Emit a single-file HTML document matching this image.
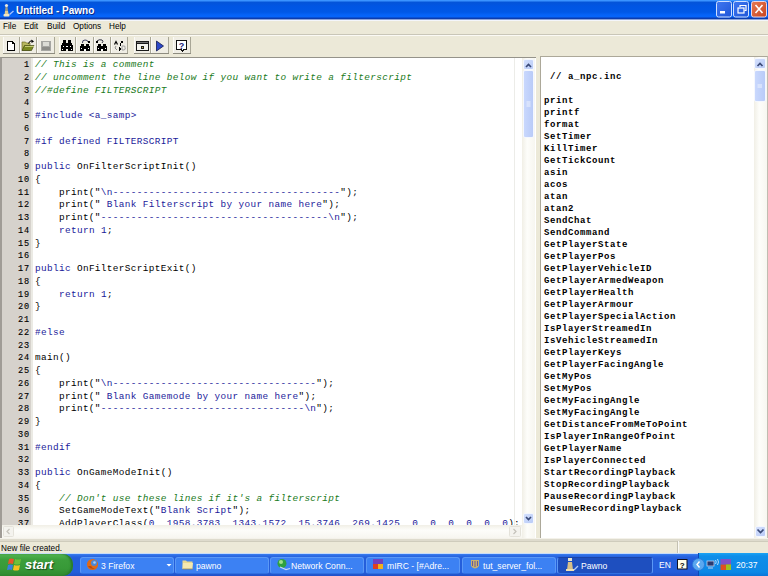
<!DOCTYPE html>
<html><head><meta charset="utf-8">
<style>
*{margin:0;padding:0;box-sizing:border-box}
html,body{width:768px;height:576px;overflow:hidden;background:#ece9d8;font-family:"Liberation Sans",sans-serif}
.a{position:absolute}
svg{position:absolute;overflow:visible}
/* title bar */
#title{left:0;top:0;width:768px;height:21px;background:linear-gradient(#3a93ff 0,#3a93ff 1px,#0454d8 2px,#0055e3 6px,#0058e6 12px,#0563f8 15px,#0665fa 17px,#0a3cb0 18px,#0a3cb0 19px,#8da4d8 19px,#8da4d8 20px,#f4f6fb 20px)}
#ttext{left:16px;top:5px;font-size:10px;font-weight:bold;color:#fff;letter-spacing:0px;text-shadow:1px 1px 0 #0a2a8a}
/* menu */
#menu{left:0;top:21px;width:768px;height:13px;background:#ece9d8}
.mi{top:22px;font-size:8.2px;color:#000}
#tbsep{left:0;top:34px;width:768px;height:2px;background:#c9c6b8;border-bottom:1px solid #fbfaf5}
/* editor */
#edframe{left:0px;top:57px;width:536px;height:481px;background:#fff;border-top:1px solid #95938a;border-left:2px solid #a09c96}
#gut{left:2px;top:58px;width:31px;height:467px;background:#d6d2cc;border-right:2px solid #ebeae4}
#gutnum{left:3px;top:59px;width:27px;text-align:right;font-family:"Liberation Mono",monospace;font-size:8.6px;letter-spacing:0.84px;font-weight:normal;-webkit-text-stroke:0.12px #000;line-height:12.75px;color:#000;white-space:pre}
#code{left:35px;top:59px;font-family:"Liberation Mono",monospace;font-size:9.4px;letter-spacing:0.36px;line-height:12.75px;white-space:pre;color:#000}
#code b{font-weight:normal}
#code .c{color:#1a7a22;font-style:italic}
#code .p{color:#1a1a9a}
#code .k{color:#1a1a9a}
#code .s{color:#1a1a9a}
#code .n{color:#000}
#edclip{left:0px;top:0px;width:520px;height:525px;overflow:hidden}
#gutnum,#code{top:59px}
#vline{left:514px;top:58px;width:1px;height:467px;background:#ecece8}
/* scrollbars */
.vtrack{background:linear-gradient(90deg,#f1efe6,#fdfdfa 40%,#f7f6f0)}
.sbtn{border-radius:2px;background:linear-gradient(135deg,#d4e0fd,#b9cbf7);border:1px solid #f4f7fe}
.thumb{border-radius:2px;background:linear-gradient(90deg,#c9d8fd,#b9cbf8);border:1px solid #f4f7fe}
#hsb{left:2px;top:525px;width:520px;height:13px;background:linear-gradient(#f1efe6,#fdfdfa 40%,#f7f6f0)}
/* right panel */
#rp{left:540px;top:56px;width:228px;height:483px;background:#fff;border-top:1px solid #aca899;border-left:1px solid #aca899;border-right:1px solid #c0bcb0}
#npc{left:544px;top:59px;font-family:"Liberation Mono",monospace;font-size:9px;letter-spacing:0.6px;font-weight:bold;line-height:12px;white-space:pre;color:#000}
/* status */
#status{left:0;top:538px;width:768px;height:15px;background:linear-gradient(#f4f2ea 0,#f4f2ea 1px,#dedbcd 1px,#dedbcd 3px,#cfccbc 3px,#cfccbc 4px,#ece9d8 4px)}
#stext{left:1px;top:544px;font-size:8.2px;color:#000}
/* taskbar */
#task{left:0;top:553px;width:768px;height:23px;background:linear-gradient(#c8dcf8 0,#c8dcf8 1px,#3a7ef0 1px,#2a68e2 3px,#245edb 5px,#245edb 19px,#2050c8 23px)}
#start{left:0;top:554px;width:73px;height:22px;border-radius:0 10px 10px 0;background:linear-gradient(#58b858 0,#4aae4a 2px,#3c9e3c 6px,#389a38 14px,#2f8a2f 22px);box-shadow:inset -2px 0 2px #2a7a2a}
#starttext{left:25px;top:557px;font-size:13px;font-weight:bold;font-style:italic;color:#fff;text-shadow:1px 1px 1px #1a4a1a}
.tk{top:557px;height:17px;width:94px;border-radius:3px;background:#3c81f3;border:1px solid #5a98f6;border-bottom-color:#3070e0}
.tkt{font-size:8.6px;color:#fff;top:3px;left:20px;white-space:nowrap}
#tray{left:698px;top:553px;width:70px;height:23px;background:linear-gradient(#1ba4f5 0,#0f8ee9 3px,#0c88e6 19px,#0a74d8 23px);border-left:1px solid #0a4ab8}
</style></head><body>
<div class="a" id="title"></div>
<div class="a" id="ttext">Untitled - Pawno</div>
<!-- title icon -->
<svg width="16" height="16" style="left:2px;top:2px" viewBox="0 0 16 16">
<circle cx="4.5" cy="3.5" r="1.6" fill="#e8e8e0"/>
<path d="M3.5 5 H5.5 L6 9 H3 Z" fill="#9a9a88"/>
<path d="M2.5 13 L3 9 H6 L6.8 13 Z" fill="#e0cc94"/>
<rect x="1.5" y="12" width="6" height="2.5" rx="1" fill="#f2e6c4"/>
<path d="M7.5 12.5 L11.5 9" stroke="#a8c4ff" stroke-width="1.3"/>
</svg>
<!-- window buttons -->
<svg width="52" height="17" style="left:716px;top:1px" viewBox="0 0 52 17">
<defs>
<linearGradient id="bl" x1="0" y1="0" x2="1" y2="1"><stop offset="0" stop-color="#3f77f0"/><stop offset="1" stop-color="#1f56d8"/></linearGradient>
<linearGradient id="rd" x1="0" y1="0" x2="1" y2="1"><stop offset="0" stop-color="#e67a55"/><stop offset="1" stop-color="#c8451f"/></linearGradient>
</defs>
<rect x="0.5" y="0.5" width="15" height="15.5" rx="2" fill="url(#bl)" stroke="#cfe0ff"/>
<rect x="4" y="10" width="5" height="2.5" fill="#fff"/>
<rect x="17.5" y="0.5" width="15" height="15.5" rx="2" fill="url(#bl)" stroke="#cfe0ff"/>
<rect x="22" y="7" width="6" height="5" fill="none" stroke="#fff" stroke-width="1.2"/>
<path d="M24 6 V4.5 H30 V9.5 H28.5" fill="none" stroke="#fff" stroke-width="1.2"/>
<rect x="35.5" y="0.5" width="15" height="15.5" rx="2" fill="url(#rd)" stroke="#e8d8e8"/>
<path d="M39.5 4 L46.5 12 M46.5 4 L39.5 12" stroke="#fff" stroke-width="1.6"/>
</svg>

<div class="a" id="menu"></div>
<div class="a mi" style="left:3px">File</div>
<div class="a mi" style="left:24px">Edit</div>
<div class="a mi" style="left:47px">Build</div>
<div class="a mi" style="left:73px">Options</div>
<div class="a mi" style="left:109px">Help</div>
<div class="a" id="tbsep"></div>

<!-- toolbar -->
<svg width="200" height="22" style="left:0;top:34px" viewBox="0 0 200 22" shape-rendering="crispEdges">
<g id="btns">
<!-- group 1: 3..54 -->
<rect x="3" y="3" width="51" height="16" fill="#efede4"/>
<rect x="3" y="3" width="1" height="16" fill="#fbfaf6"/><rect x="20" y="3" width="1" height="16" fill="#fbfaf6"/><rect x="37" y="3" width="1" height="16" fill="#fbfaf6"/>
<rect x="19" y="3" width="1" height="16" fill="#a9a797"/><rect x="36" y="3" width="1" height="16" fill="#a9a797"/><rect x="54" y="3" width="1" height="16" fill="#a9a797"/>
<rect x="3" y="19" width="52" height="1" fill="#8e8c80"/>
<!-- group 2: 59..127 -->
<rect x="59" y="3" width="69" height="16" fill="#efede4"/>
<rect x="59" y="3" width="1" height="16" fill="#fbfaf6"/><rect x="76" y="3" width="1" height="16" fill="#fbfaf6"/><rect x="94" y="3" width="1" height="16" fill="#fbfaf6"/><rect x="111" y="3" width="1" height="16" fill="#fbfaf6"/>
<rect x="75" y="3" width="1" height="16" fill="#a9a797"/><rect x="93" y="3" width="1" height="16" fill="#a9a797"/><rect x="110" y="3" width="1" height="16" fill="#a9a797"/><rect x="127" y="3" width="1" height="16" fill="#a9a797"/>
<rect x="59" y="19" width="69" height="1" fill="#8e8c80"/>
<!-- group 3: 134..168 -->
<rect x="134" y="3" width="35" height="16" fill="#efede4"/>
<rect x="134" y="3" width="1" height="16" fill="#fbfaf6"/><rect x="151" y="3" width="1" height="16" fill="#fbfaf6"/>
<rect x="150" y="3" width="1" height="16" fill="#a9a797"/><rect x="168" y="3" width="1" height="16" fill="#a9a797"/>
<rect x="134" y="19" width="35" height="1" fill="#8e8c80"/>
<!-- group 4: 173..190 -->
<rect x="173" y="3" width="18" height="16" fill="#efede4"/>
<rect x="173" y="3" width="1" height="16" fill="#fbfaf6"/>
<rect x="190" y="3" width="1" height="16" fill="#a9a797"/>
<rect x="173" y="19" width="18" height="1" fill="#8e8c80"/>
</g>
<!-- new doc 7..15, 7..17 -->
<path d="M7.5 7.5 H12.5 L14.5 9.5 V16.5 H7.5 Z" fill="#fff" stroke="#000"/>
<path d="M12.5 7.5 V9.5 H14.5" fill="none" stroke="#000"/>
<!-- open folder -->
<path d="M22 8 H25.5 L26.5 9 H30 V16.5 H22 Z" fill="#b8b860" stroke="#606018" stroke-width="0.6" shape-rendering="auto"/>
<path d="M22 16.5 L24.5 11.5 H34 L31.5 16.5 Z" fill="#7a8a20" stroke="#3a4010" stroke-width="0.6" shape-rendering="auto"/>
<path d="M24.5 12 H33.5" stroke="#d8dc8a" stroke-width="0.8"/>
<path d="M28.5 9.5 Q29.5 6.5 32 6.8" fill="none" stroke="#000" stroke-width="1" shape-rendering="auto"/>
<path d="M31.5 5.5 L34 7.5 L31.5 9 Z" fill="#000" shape-rendering="auto"/>
<!-- save disabled -->
<rect x="41" y="7" width="10" height="10" fill="#a6a6a2"/>
<rect x="43" y="8" width="6" height="4" fill="#dcdcd6"/>
<rect x="42" y="13" width="8" height="3" fill="#8c8c88"/>
<!-- binoculars 61..73, 40..50 => y 6..16 -->
<g fill="#000">
<rect x="63" y="6" width="3" height="3"/><rect x="68" y="6" width="3" height="3"/>
<rect x="62" y="9" width="5" height="2"/><rect x="67" y="9" width="5" height="2"/>
<rect x="61" y="11" width="12" height="4"/>
<rect x="61" y="15" width="5" height="2"/><rect x="68" y="15" width="5" height="2"/>
</g>
<g fill="#fff">
<rect x="63" y="12" width="1" height="1"/><rect x="66" y="12" width="1" height="1"/><rect x="67" y="12" width="1" height="1"/><rect x="70" y="12" width="1" height="1"/>
<rect x="62" y="15" width="1" height="1"/><rect x="71" y="15" width="1" height="1"/>
</g>
<!-- find next -->
<g fill="#000">
<rect x="81" y="10" width="3" height="2"/><rect x="86" y="10" width="3" height="2"/>
<rect x="80" y="12" width="10" height="5"/>
</g>
<g fill="#fff"><rect x="81" y="14" width="1" height="1"/><rect x="88" y="14" width="1" height="1"/><rect x="84" y="15" width="2" height="2"/></g>
<path d="M82.5 9 Q82 6 85 6 Q88 6 88 8" fill="none" stroke="#404060" stroke-width="1" shape-rendering="auto"/>
<rect x="88" y="7" width="2" height="2" fill="#000"/>
<!-- replace -->
<g fill="#000">
<rect x="98" y="10" width="3" height="2"/><rect x="103" y="10" width="3" height="2"/>
<rect x="97" y="12" width="10" height="5"/>
</g>
<g fill="#fff"><rect x="98" y="14" width="1" height="1"/><rect x="105" y="14" width="1" height="1"/><rect x="101" y="15" width="2" height="2"/></g>
<path d="M97 7 Q99 5 102 6 Q104 7 102 9" fill="none" stroke="#303040" stroke-width="1" shape-rendering="auto"/>
<rect x="96" y="7" width="2" height="2" fill="#000"/>
<!-- A->B -->
<path d="M114.5 10.5 L116 7.5 L117.5 10.5" fill="none" stroke="#000" stroke-width="1.2" shape-rendering="auto"/>
<rect x="121" y="7" width="2" height="2" fill="#000"/><rect x="120" y="9" width="1" height="3" fill="#000"/>
<path d="M116 12 L115 14 L117 16" fill="none" stroke="#909090" shape-rendering="auto"/>
<path d="M119 13 L121 15 L119 17 Z" fill="#000"/>
<path d="M122 12 H124 Q125.5 12 125 13.5 Q126 15.5 124 16 H122 Z" fill="none" stroke="#a0a0a0" shape-rendering="auto"/>
<!-- window icon 136..148, y 7..16 -->
<rect x="136" y="7" width="13" height="10" fill="#1a1a1a"/>
<rect x="137" y="10" width="11" height="6" fill="#f4f4ee"/>
<rect x="137" y="8" width="11" height="1" fill="#707070"/>
<rect x="141" y="12" width="3" height="3" fill="#202020"/><rect x="142" y="13" width="1" height="1" fill="#c0b040"/>
<!-- play -->
<path d="M156.5 7 L163.5 12 L156.5 17 Z" fill="#2c48c8" stroke="#101850" stroke-width="0.8" shape-rendering="auto"/>
<!-- help bubble -->
<path d="M176.5 6.5 H186.5 V15.5 H183.5 L182.5 17.5 L181 15.5 H176.5 Z" fill="#fff" stroke="#111" stroke-width="1"/>
<text x="181.6" y="14.5" font-family="Liberation Sans" font-size="9" font-weight="bold" fill="#1a1a7a" text-anchor="middle">?</text>
</svg>

<div class="a" id="edframe"></div>
<div class="a" id="gut"></div>
<div class="a" id="vline"></div>
<div class="a" id="edclip">
<div class="a" id="gutnum">1
2
3
4
5
6
7
8
9
10
11
12
13
14
15
16
17
18
19
20
21
22
23
24
25
26
27
28
29
30
31
32
33
34
35
36
37</div>
<div class="a" id="code"><b class="c">// This is a comment</b>
<b class="c">// uncomment the line below if you want to write a filterscript</b>
<b class="c">//#define FILTERSCRIPT</b>

<b class="p">#include &lt;a_samp&gt;</b>

<b class="p">#if defined FILTERSCRIPT</b>

<b class="k">public</b><b class="n"> OnFilterScriptInit()</b>
<b class="n">{</b>
<b class="n">    print("</b><b class="s">\n--------------------------------------</b><b class="n">");</b>
<b class="n">    print("</b><b class="s"> Blank Filterscript by your name here</b><b class="n">");</b>
<b class="n">    print("</b><b class="s">--------------------------------------\n</b><b class="n">");</b>
<b class="n">    </b><b class="k">return</b><b class="n"> </b><b class="s">1</b><b class="n">;</b>
<b class="n">}</b>

<b class="k">public</b><b class="n"> OnFilterScriptExit()</b>
<b class="n">{</b>
<b class="n">    </b><b class="k">return</b><b class="n"> </b><b class="s">1</b><b class="n">;</b>
<b class="n">}</b>

<b class="p">#else</b>

<b class="n">main()</b>
<b class="n">{</b>
<b class="n">    print("</b><b class="s">\n----------------------------------</b><b class="n">");</b>
<b class="n">    print("</b><b class="s"> Blank Gamemode by your name here</b><b class="n">");</b>
<b class="n">    print("</b><b class="s">----------------------------------\n</b><b class="n">");</b>
<b class="n">}</b>

<b class="p">#endif</b>

<b class="k">public</b><b class="n"> OnGameModeInit()</b>
<b class="n">{</b>
<b class="n">    </b><b class="c">// Don't use these lines if it's a filterscript</b>
<b class="n">    SetGameModeText("</b><b class="s">Blank Script</b><b class="n">");</b>
<b class="n">    AddPlayerClass(</b><b class="s">0</b><b class="n">, </b><b class="s">1958.3783</b><b class="n">, </b><b class="s">1343.1572</b><b class="n">, </b><b class="s">15.3746</b><b class="n">, </b><b class="s">269.1425</b><b class="n">, </b><b class="s">0</b><b class="n">, </b><b class="s">0</b><b class="n">, </b><b class="s">0</b><b class="n">, </b><b class="s">0</b><b class="n">, </b><b class="s">0</b><b class="n">, </b><b class="s">0</b><b class="n">);</b></div>
</div>
<div class="a vtrack" style="left:522px;top:58px;width:13px;height:480px"></div>
<div class="a sbtn" style="left:523px;top:59px;width:11px;height:11px"></div>
<div class="a thumb" style="left:523px;top:70px;width:11px;height:68px"></div>
<div class="a sbtn" style="left:523px;top:513px;width:11px;height:11px"></div>
<div class="a" id="hsb"></div>
<svg width="540" height="500" style="left:0;top:0">
<path d="M526 67 L528.5 64.5 L531 67" fill="none" stroke="#3a4a78" stroke-width="1.7"/>
<path d="M526 517 L528.5 519.5 L531 517" fill="none" stroke="#3a4a78" stroke-width="1.7"/>
<path d="M526.5 102 H530.5 M526.5 104 H530.5 M526.5 106 H530.5" stroke="#eef3fe" stroke-width="1"/>
</svg>
<svg width="540" height="576" style="left:0;top:0">
<rect x="3.5" y="526.5" width="10" height="10" rx="1" fill="#f4f3ee" stroke="#e4e2da"/>
<path d="M9.5 529 L7 531.5 L9.5 534" fill="none" stroke="#c4c2ba" stroke-width="1.2"/>
<rect x="509.5" y="526.5" width="11" height="10" rx="1" fill="#f4f3ee" stroke="#e4e2da"/>
<path d="M513.5 529 L516 531.5 L513.5 534" fill="none" stroke="#c4c2ba" stroke-width="1.2"/>
</svg>

<div class="a" id="rp"></div>
<div class="a" id="npc">
 // a_npc.inc

print
printf
format
SetTimer
KillTimer
GetTickCount
asin
acos
atan
atan2
SendChat
SendCommand
GetPlayerState
GetPlayerPos
GetPlayerVehicleID
GetPlayerArmedWeapon
GetPlayerHealth
GetPlayerArmour
GetPlayerSpecialAction
IsPlayerStreamedIn
IsVehicleStreamedIn
GetPlayerKeys
GetPlayerFacingAngle
GetMyPos
SetMyPos
GetMyFacingAngle
SetMyFacingAngle
GetDistanceFromMeToPoint
IsPlayerInRangeOfPoint
GetPlayerName
IsPlayerConnected
StartRecordingPlayback
StopRecordingPlayback
PauseRecordingPlayback
ResumeRecordingPlayback</div>
<div class="a vtrack" style="left:754px;top:57px;width:13px;height:481px"></div>
<div class="a sbtn" style="left:754px;top:58px;width:12px;height:11px"></div>
<div class="a thumb" style="left:754px;top:70px;width:12px;height:32px"></div>
<div class="a sbtn" style="left:755px;top:526px;width:11px;height:11px"></div>
<svg width="768" height="576" style="left:0;top:0">
<path d="M757.5 66 L760 63.5 L762.5 66" fill="none" stroke="#3a4a78" stroke-width="1.7"/>
<path d="M757.5 85 H762 M757.5 87 H762" stroke="#eef3fe" stroke-width="1"/>
<path d="M757.5 529.5 L760.5 532.5 L763.5 529.5" fill="none" stroke="#3a4a78" stroke-width="1.7"/>
</svg>

<div class="a" id="status"></div>
<div class="a" style="left:677px;top:541px;width:1px;height:12px;background:#c4c1b2"></div><div class="a" style="left:678px;top:541px;width:1px;height:12px;background:#faf9f4"></div>
<div class="a" id="stext">New file created.</div>

<div class="a" id="task"></div>
<div class="a" id="start"></div>
<svg width="16" height="14" style="left:7px;top:557px" viewBox="0 0 16 14">
<path d="M2 2 Q4 1 7 2 L6 7 Q3 6 1 7 Z" fill="#e8552a"/>
<path d="M8 2 Q11 3 14 2 L13 7 Q10 8 7 7 Z" fill="#6fbf3a"/>
<path d="M1 8 Q3 7 6 8 L5 13 Q3 12 0 13 Z" fill="#3a7fe0"/>
<path d="M7 8 Q10 9 13 8 L12 13 Q9 14 6 13 Z" fill="#f5c020"/>
</svg>
<div class="a" id="starttext">start</div>
<div class="a tk" style="left:80px"><div class="a tkt" style="left:20px">3 Firefox</div></div>
<div class="a tk" style="left:175px"><div class="a tkt" style="left:20px">pawno</div></div>
<div class="a tk" style="left:270px"><div class="a tkt" style="left:20px">Network Conn...</div></div>
<div class="a tk" style="left:366px"><div class="a tkt" style="left:20px">mIRC - [#Adre...</div></div>
<div class="a tk" style="left:462px"><div class="a tkt" style="left:20px">tut_server_fol...</div></div>
<div class="a tk" style="left:557px;width:96px;background:#1e4fbf;border-top-color:#1a44a8"><div class="a tkt" style="left:23px">Pawno</div></div>
<div class="a" id="tray"></div>
<svg width="768" height="576" style="left:0;top:0">
<!-- firefox -->
<circle cx="92.5" cy="564.5" r="5.6" fill="#e06a18"/>
<circle cx="94" cy="563" r="3" fill="#4a88d8"/>
<circle cx="94.5" cy="562.5" r="1.3" fill="#a8d0f8"/>
<path d="M88 566 Q90 569.5 95 569 Q92 568 91 566 Z" fill="#b84a10"/>
<path d="M166.5 564 H171.5 L169 566.5 Z" fill="#fff"/>
<!-- folder -->
<path d="M182.5 560.5 H186 L187 561.5 H192.5 V569 H182.5 Z" fill="#e8d890"/>
<path d="M183 563 H193 L192 569 H182.5 Z" fill="#f4e8b0"/>
<path d="M182.5 569 H192.5" stroke="#9a8a50" stroke-width="0.8"/>
<!-- network -->
<circle cx="282" cy="563.5" r="4.5" fill="#2fa040"/>
<circle cx="281" cy="562" r="2" fill="#9ee08a"/>
<path d="M280 567 L286 569.5 L290 568.5" fill="none" stroke="#c8d8f8" stroke-width="1.2"/>
<!-- mirc -->
<rect x="373" y="559" width="10" height="5" fill="#7040c0"/>
<rect x="373" y="564" width="10" height="5" fill="#e04020"/>
<rect x="378" y="564" width="5" height="5" fill="#f0b020"/>
<!-- tut (winrar-ish) -->
<path d="M471 560 H479 V566 Q475 571 471 566 Z" fill="#c8b070"/>
<path d="M472.5 561 V566 M475 561 V567 M477.5 561 V566" stroke="#6a5a9a" stroke-width="1"/>
<!-- pawn active -->
<rect x="568" y="558" width="4" height="3" fill="#e8e4d0"/>
<path d="M567 570 L568 562 H572 L573 570 Z" fill="#d8c088"/>
<rect x="566" y="569" width="8" height="2" fill="#f0e0b0"/>
<path d="M574 570 L578 566" stroke="#b0c8f8" stroke-width="1.2"/>
<!-- tray help -->
<rect x="677.5" y="559.5" width="9.5" height="9.5" fill="#fffce8" stroke="#101020"/>
<text x="682.3" y="567.5" font-family="Liberation Sans" font-size="8" font-weight="bold" fill="#000" text-anchor="middle">?</text>
<!-- chevron -->
<circle cx="698.5" cy="564.5" r="6" fill="#5aa8f0" stroke="#2a78d8" stroke-width="0.8"/>
<path d="M699.5 561.5 L697 564.5 L699.5 567.5" fill="none" stroke="#fff" stroke-width="1.4"/>
<!-- network tray -->
<rect x="707" y="561" width="7" height="5" fill="#2a3a70" stroke="#c0d0f0" stroke-width="0.8"/>
<path d="M708 568 H713" stroke="#c0d0f0" stroke-width="1"/>
<path d="M715.5 560 Q717 562 715.5 564 M717.5 559 Q719.5 562 717.5 565" fill="none" stroke="#e0ecff" stroke-width="0.8"/>
<!-- mirc tray -->
<rect x="720.5" y="559" width="10.5" height="5.5" fill="#8050c8"/>
<rect x="720.5" y="564.5" width="10.5" height="5.5" fill="#e05020"/>
<rect x="726" y="564.5" width="5" height="5.5" fill="#a0c020"/>
</svg>
<div class="a" style="left:659px;top:560px;font-size:8.6px;color:#fff">EN</div>
<div class="a" style="left:736px;top:560px;font-size:8.6px;color:#fff">20:37</div>
</body></html>
